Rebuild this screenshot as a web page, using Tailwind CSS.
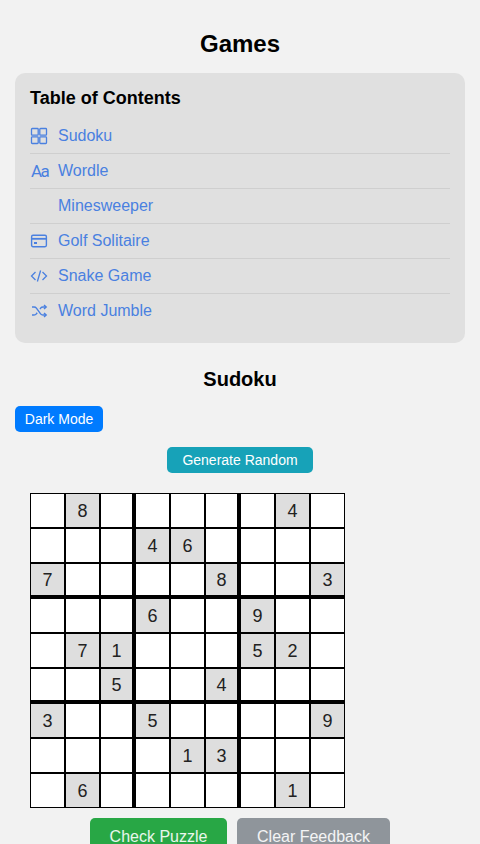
<!DOCTYPE html>
<html lang="en">
<head>
  <meta charset="UTF-8" />
  <meta name="viewport" content="width=device-width, initial-scale=1.0" />
  <title>Games</title>
  <script src="https://cdn.jsdelivr.net/npm/@tailwindcss/browser@4"></script>
</head>
<body class="bg-[#f2f2f2] h-screen overflow-hidden px-[15px] font-['Liberation_Sans',Arial,sans-serif] text-[#111]">

  <h1 class="text-2xl font-bold text-center mt-[30px] leading-[28px] text-black">Games</h1>

  <!-- Table of contents -->
  <nav class="bg-[#e0e0e0] rounded-[10px] mt-[15px] px-[15px] pt-[15px] h-[270px]">
    <h2 class="text-lg font-bold leading-5 text-black mb-[11px]">Table of Contents</h2>
    <ul class="text-[#4a80e0] text-base">
      <li class="h-[35px] flex items-center gap-2.5 border-b border-[#cfcfcf]">
        <svg class="w-[18px] h-[18px] shrink-0" viewBox="0 0 18 18" fill="none" stroke="currentColor" stroke-width="1.3"><rect x="1.500" y="1.500" width="6.700" height="6.700" rx="0.800"/><rect x="9.800" y="1.500" width="6.700" height="6.700" rx="0.800"/><rect x="1.500" y="9.800" width="6.700" height="6.700" rx="0.800"/><rect x="9.800" y="9.800" width="6.700" height="6.700" rx="0.800"/></svg>
        <a href="#sudoku">Sudoku</a>
      </li>
      <li class="h-[35px] flex items-center gap-2.5 border-b border-[#cfcfcf]">
        <span class="w-[18px] shrink-0 pl-px font-['Roboto',sans-serif] font-normal text-[17px] tracking-[-1.5px] pt-0.5">Aa</span>
        <a href="#wordle">Wordle</a>
      </li>
      <li class="h-[35px] flex items-center gap-2.5 border-b border-[#cfcfcf]">
        <span class="w-[18px] shrink-0"></span>
        <a href="#minesweeper">Minesweeper</a>
      </li>
      <li class="h-[35px] flex items-center gap-2.5 border-b border-[#cfcfcf]">
        <svg class="w-[18px] h-[18px] shrink-0" viewBox="0 0 18 18" fill="none" stroke="currentColor" stroke-width="1.4"><rect x="1.600" y="3.300" width="14.800" height="11.400" rx="1.400"/><path d="M1.600 6.800h14.800" stroke-width="1.800"/><rect x="4" y="10" width="3" height="2" fill="currentColor" stroke="none"/></svg>
        <a href="#golf">Golf Solitaire</a>
      </li>
      <li class="h-[35px] flex items-center gap-2.5 border-b border-[#cfcfcf]">
        <svg class="w-[18px] h-[18px] shrink-0" viewBox="0 0 18 18" fill="none" stroke="currentColor" stroke-width="1.3"><path d="M5.500 5l-4 4 4 4"/><path d="M12.500 5l4 4-4 4"/><path d="M10.600 3.500l-3.200 11"/></svg>
        <a href="#snake">Snake Game</a>
      </li>
      <li class="h-[35px] flex items-center gap-2.5 border-b border-transparent">
        <svg class="w-[18px] h-[18px] shrink-0" viewBox="0 0 18 18" fill="none" stroke="currentColor" stroke-width="1.4"><path d="M2 5h2a3 3 0 0 1 2.400 1.200l4.200 5.600A3 3 0 0 0 13 13h3"/><path d="M2 13h2a3 3 0 0 0 2.400-1.200l.8-1"/><path d="M10 7l.6-.8A3 3 0 0 1 13 5h3"/><path d="M14 3l2.200 2L14 7"/><path d="M14 11l2.200 2L14 15"/></svg>
        <a href="#jumble">Word Jumble</a>
      </li>
    </ul>
  </nav>

  <!-- Sudoku -->
  <section id="sudoku">
    <h2 class="text-xl font-bold text-center text-black leading-6 mt-6">Sudoku</h2>

    <button class="block mt-[15px] h-[26px] w-[88px] bg-[#007bff] text-white text-sm rounded-[5px]">Dark Mode</button>

    <div class="flex justify-center mt-[15px]">
      <button class="h-[26px] w-[146px] bg-[#17a2b8] text-white text-sm rounded-[5px]">Generate Random</button>
    </div>

    <div id="grid" class="grid grid-cols-[repeat(9,35px)] auto-rows-[35px] mt-5 ml-[15px] w-[315px]"></div>

    <div class="flex justify-center gap-2.5 mt-2.5">
      <button class="h-[38px] w-[137px] bg-[#28a745] text-white/90 text-base rounded-[5px]">Check Puzzle</button>
      <button class="h-[38px] w-[153px] bg-[#8f959b] text-white/90 text-base rounded-[5px]">Clear Feedback</button>
    </div>
  </section>

  <script>
    const puzzle = [
      '080000040',
      '000460000',
      '700008003',
      '000600900',
      '071000520',
      '005004000',
      '300500009',
      '000013000',
      '060000010'
    ];

    const grid = document.getElementById('grid');
    puzzle.forEach((row, r) => {
      [...row].forEach((val, c) => {
        const cell = document.createElement('div');
        const cls = ['flex items-center justify-center text-lg text-[#222] border border-black'];
        cls.push(val === '0' ? 'bg-white' : 'bg-[#dedede]');
        if (c === 2 || c === 5) cls.push('border-r-[3px]');
        if (r === 2 || r === 5) cls.push('border-b-[3px]');
        cell.className = cls.join(' ');
        cell.textContent = val === '0' ? '' : val;
        grid.appendChild(cell);
      });
    });
  </script>
</body>
</html>
